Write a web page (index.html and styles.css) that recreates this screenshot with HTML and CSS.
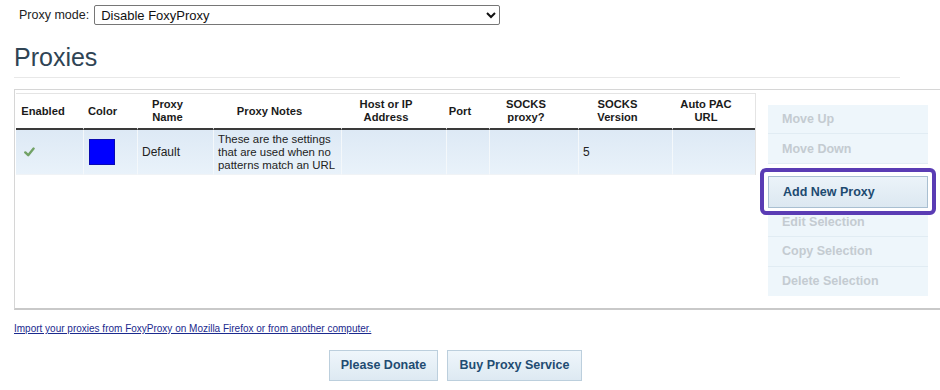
FILE: index.html
```html
<!DOCTYPE html>
<html>
<head>
<meta charset="utf-8">
<title>FoxyProxy Options</title>
<link rel="stylesheet" href="styles.css">
</head>
<body>
<div class="page">
  <div class="mode-bar">
    <label class="mode-label" for="mode">Proxy mode:</label>
    <select id="mode" class="mode-select">
      <option>Disable FoxyProxy</option>
    </select>
  </div>

  <h1 class="title">Proxies</h1>

  <div class="panel">
    <table class="proxies">
      <colgroup>
        <col class="c-enabled"><col class="c-color"><col class="c-name"><col class="c-notes"><col class="c-host"><col class="c-port"><col class="c-socks"><col class="c-ver"><col class="c-pac">
      </colgroup>
      <thead>
        <tr>
          <th>Enabled</th>
          <th>Color</th>
          <th>Proxy<br>Name</th>
          <th>Proxy Notes</th>
          <th>Host or IP<br>Address</th>
          <th>Port</th>
          <th>SOCKS<br>proxy?</th>
          <th>SOCKS<br>Version</th>
          <th>Auto PAC<br>URL</th>
        </tr>
      </thead>
      <tbody>
        <tr>
          <td class="cell-check"><svg class="check" width="11" height="10" viewBox="0 0 11 10"><path d="M1.3 5.4 L4.2 8.2 L9.6 1.6" fill="none" stroke="#72a266" stroke-width="2.4" stroke-linecap="round" stroke-linejoin="round"/></svg></td>
          <td class="cell-color"><span class="swatch"></span></td>
          <td>Default</td>
          <td class="cell-notes">These are the settings<br>that are used when no<br>patterns match an URL</td>
          <td></td>
          <td></td>
          <td></td>
          <td>5</td>
          <td></td>
        </tr>
      </tbody>
    </table>

    <div class="side">
      <div class="side-group">
        <div class="side-btn disabled">Move Up</div>
        <div class="side-btn disabled">Move Down</div>
      </div>
      <div class="side-group second">
        <div class="side-btn add highlighted">Add New Proxy</div>
        <div class="side-btn disabled">Edit Selection</div>
        <div class="side-btn disabled">Copy Selection</div>
        <div class="side-btn disabled last">Delete Selection</div>
      </div>
    </div>
  </div>

  <a class="import-link" href="#">Import your proxies from FoxyProxy on Mozilla Firefox or from another computer.</a>

  <div class="bottom-buttons">
    <button class="big-btn donate">Please Donate</button>
    <button class="big-btn buy">Buy Proxy Service</button>
  </div>
</div>
</body>
</html>
```

FILE: styles.css
```css
html, body {
  margin: 0;
  padding: 0;
  background: #ffffff;
  overflow: hidden;
}

body {
  font-family: "Liberation Sans", Arial, sans-serif;
  color: #222;
}

.page {
  padding: 0 40px 0 14px;
  width: 886px;
}

.mode-bar {
  display: flex;
  align-items: center;
  gap: 4px;
  padding: 5px 0 0 5px;
  height: 20px;
}

.mode-label {
  font-size: 12.5px;
  color: #222;
}

.mode-select {
  width: 406px;
  height: 20px;
  font-family: "Liberation Sans", Arial, sans-serif;
  font-size: 13px;
  color: #111;
  border: 1px solid #767676;
  border-radius: 2px;
  background: #fff;
  padding: 0 2px;
  margin: 0 0 0 1px;
}

.title {
  margin: 18px 0 0 0;
  font-size: 25px;
  line-height: 29px;
  font-weight: normal;
  color: #2f4454;
  padding-bottom: 5px;
  border-bottom: 1px solid #e8e8e8;
}

.panel {
  margin-top: 11px;
  margin-right: -80px;
  border: 1px solid #d6d6d6;
  border-bottom: 2px solid #c9c9c9;
  padding: 3px 0 12px 1px;
  display: flex;
  align-items: flex-start;
}

.proxies {
  table-layout: fixed;
  width: 740px;
  border-collapse: separate;
  border-spacing: 0;
  border-top: 1px solid #e4e4e4;
  border-right: 1px solid #e4e4e4;
  margin-right: 12px;
  flex: none;
}

.c-enabled { width: 67px; }
.c-color { width: 54px; }
.c-name { width: 76px; }
.c-notes { width: 128px; }
.c-host { width: 105px; }
.c-port { width: 43px; }
.c-socks { width: 89px; }
.c-ver { width: 94px; }
.c-pac { width: 83px; }

.proxies th {
  height: 34px;
  padding: 0 16px 0 0;
  font-size: 11.2px;
  line-height: 13px;
  font-weight: bold;
  color: #1a1a1a;
  text-align: center;
  vertical-align: middle;
  border-bottom: 2px solid #3a3a3a;
  border-left: 1px solid #fff;
}

.proxies th:first-child {
  border-left: none;
  padding-left: 3px;
}

.proxies td {
  height: 44px;
  padding: 0 4px;
  font-size: 12px;
  line-height: 13px;
  color: #222;
  vertical-align: middle;
  background: linear-gradient(#dde9f5, #e9f2fa);
  border-left: 1px solid #f4f8fb;
  border-bottom: 1px solid #f0f3f6;
}

.proxies td:first-child {
  border-left: none;
}

.proxies td.cell-notes {
  font-size: 11.4px;
  line-height: 13px;
  white-space: nowrap;
  overflow: hidden;
}

.proxies td.cell-check {
  padding-left: 8px;
}

.check {
  display: block;
}

.proxies td.cell-color {
  padding-left: 5px;
}

.swatch {
  display: block;
  width: 24px;
  height: 24px;
  background: #0000ff;
  border: 1px solid #0a0ab0;
}

.side {
  width: 160px;
  flex: none;
  margin-top: 12px;
}

.side-group {
  background: #eef6fb;
}

.side-group.second {
  margin-top: 12px;
}

.side-btn {
  box-sizing: border-box;
  height: 30px;
  display: flex;
  align-items: center;
  padding-left: 14px;
  font-size: 12.5px;
  font-weight: bold;
  border-bottom: 1px solid #e1ecf3;
}

.side-btn.disabled {
  color: #c4cbd1;
  height: 29.4px;
}

.side-btn.last {
  border-bottom: none;
}

.side-btn.add {
  height: 32px;
  color: #1d4a70;
  background: linear-gradient(#ebf3f9, #dce8f1);
  border: 1px solid #a9bfd1;
  padding-left: 14px;
}

.highlighted {
  position: relative;
}

.highlighted::after {
  content: "";
  position: absolute;
  left: -9px;
  right: -9px;
  top: -9px;
  bottom: -8px;
  border: 4px solid #5a3cb4;
  border-radius: 6px;
  box-shadow: inset 0 0 0 3px #ffffff;
  pointer-events: none;
  z-index: 2;
}

.import-link {
  display: block;
  margin-top: 13px;
  font-size: 10px;
  line-height: 12px;
  color: #1b2a8e;
  text-decoration: underline;
}

.bottom-buttons {
  display: flex;
  justify-content: center;
  gap: 9px;
  margin-top: 15px;
  margin-right: 3px;
}

.big-btn {
  height: 31px;
  margin: 0;
  padding: 0;
  font-family: "Liberation Sans", Arial, sans-serif;
  font-size: 12.5px;
  font-weight: bold;
  color: #1f4c72;
  background: linear-gradient(#eff6fb, #dde9f2);
  border: 1px solid #bccfdd;
  border-radius: 0;
}

.donate { width: 109px; }
.buy { width: 135px; }
```
